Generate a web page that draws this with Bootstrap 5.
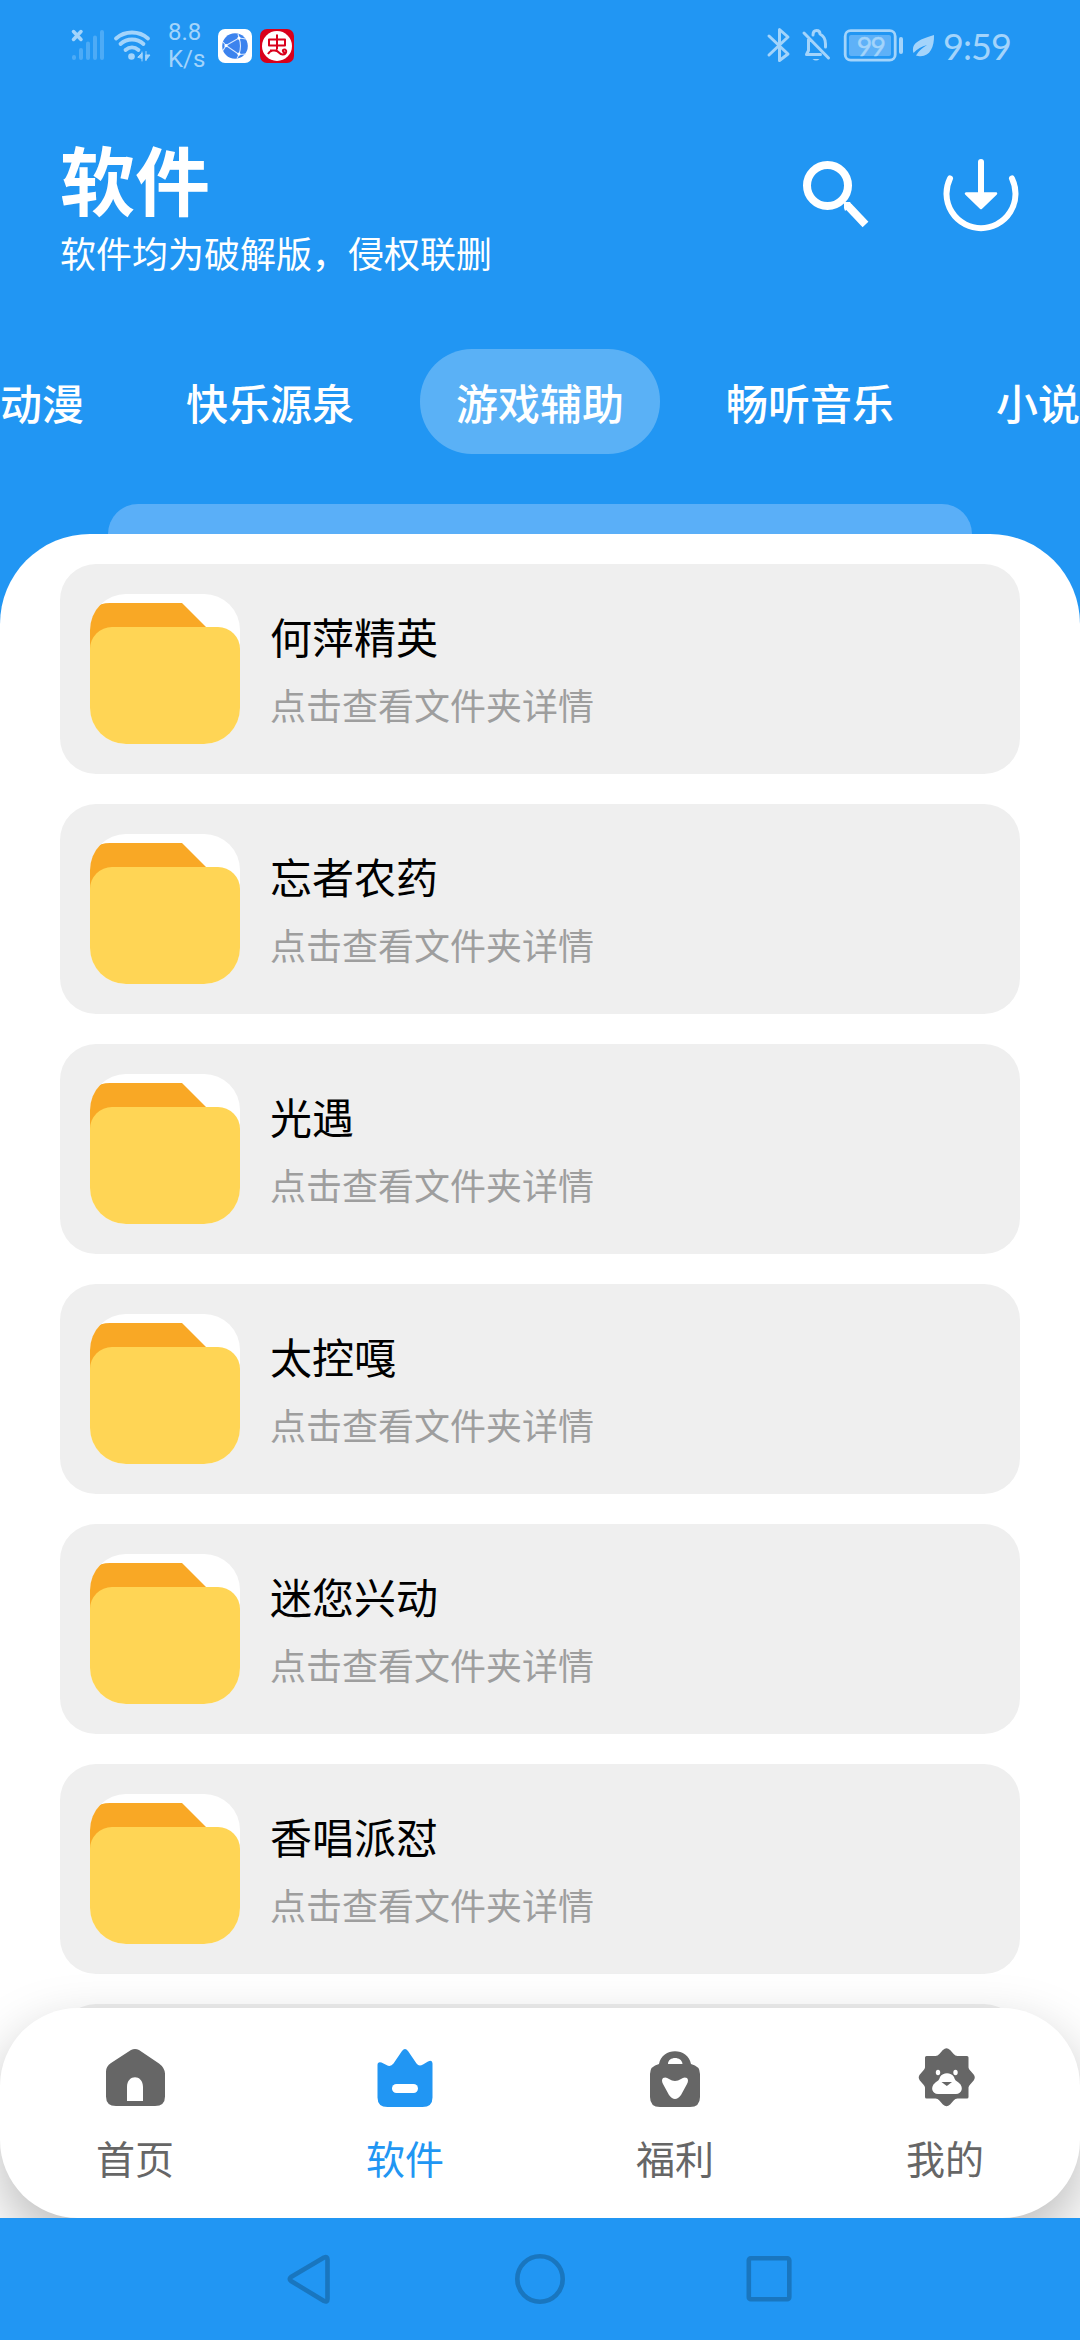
<!DOCTYPE html>
<html lang="zh-CN">
<head>
<meta charset="utf-8">
<meta name="viewport" content="width=device-width, initial-scale=1">
<title>软件</title>
<link href="https://cdn.jsdelivr.net/npm/bootstrap@5.3.0/dist/css/bootstrap.min.css" rel="stylesheet">
<style>
  :root { --app-blue: #2196f3; --status-tint: #a3d4fb; }
  body { font-family: "Noto Sans CJK SC", sans-serif; background: var(--app-blue); }
  .screen { width: 1080px; height: 2340px; background: var(--app-blue); }
  svg { display: block; flex: none; }
  .statusbar { height: 92px; padding: 0 70px 0 68px; color: var(--status-tint); font-family: Roboto, sans-serif; }
  .net-speed { width: 34px; margin-left: 16px; margin-right: 16px; font-size: 24px; line-height: 27px; white-space: nowrap; }
  .clock { font-family: Lato, sans-serif; font-size: 36px; line-height: 1; letter-spacing: -.9px; margin-left: 8px; width: 67px; }
  .app-head { height: 257px; padding: 41px 60px 0; }
  .app-title { font-size: 75px; font-weight: 700; line-height: 90px; }
  .app-note { font-size: 36px; line-height: 50px; margin-top: 4px; }
  .head-icons { margin-top: 22px; }
  .tabs-strip { height: 105px; gap: 30px; }
  .tabs-strip .nav-link { width: 240px; height: 105px; padding: 0; border-radius: 52px; color: #fff; font-size: 42px; font-weight: 500; line-height: 105px; text-align: center; flex: none; white-space: nowrap; }
  .tabs-strip .nav-link.active { background: rgba(255,255,255,.26); }
  .peek { height: 30px; margin: 50px 108px 0; border-radius: 30px 30px 0 0; background: #5aaff8; }
  .panel { min-height: 0; flex: 1 1 0; background: #fff; border-radius: 90px 90px 0 0; padding: 30px 60px 0; gap: 30px; }
  .folder-card { height: 210px; border: 0; border-radius: 36px; background: #efefef; padding: 30px; gap: 30px; flex: none; }
  .thumb { border-radius: 36px; }
  .folder-name { font-size: 42px; line-height: 60px; color: #000; margin-top: 12px; }
  .folder-desc { font-size: 36px; line-height: 52px; color: #9e9e9e; margin-top: 12px; }
  .dock-wrap { height: 210px; position: relative; background: #fff; }
  .dock { height: 210px; background: #fff; border-radius: 78px; box-shadow: 0 24px 56px rgba(0,0,0,.27); padding-top: 36px; }
  .dock .nav-link { color: #666; padding: 0; font-size: 39px; line-height: 56px; }
  .dock .nav-link.active { color: var(--app-blue); }
  .dock svg { margin-bottom: 19px; }
  .sysbar { height: 122px; background: var(--app-blue); position: relative; }
</style>
</head>
<body>
<main class="screen mx-auto d-flex flex-column overflow-hidden">
  <header class="statusbar d-flex align-items-center flex-shrink-0">
    <svg width="84" height="44" viewBox="68 24 84 44" fill="none" stroke-linecap="round">
      <path d="M73.500 31.500l7.500 8M81 31.500l-7.500 8" stroke="#a3d4fb" stroke-width="3.500"/>
      <path d="M74 57v1M81 50v8M88 43.500v14.500M95 37.500v20.500M102 32v26" stroke="#4dabf6" stroke-width="4"/>
      <path d="M116 38.500c9-8 23-8 32 0M120.500 44c6.500-6 16.500-6 23 0M125.500 50c4-3.500 9-3.500 13 0" stroke="#a3d4fb" stroke-width="3.800"/>
      <circle cx="131.500" cy="56.500" r="3.300" fill="#a3d4fb"/>
      <path d="M142 52v9M138 57l4-4v5zM146 51.500v9M146 60l4-5h-4z" fill="#a3d4fb" stroke="#a3d4fb" stroke-width="1"/>
    </svg>
    <div class="net-speed">8.8<br>K/s</div>
    <svg width="76" height="34" viewBox="218 29 76 34" fill="none">
      <rect x="218" y="29" width="34" height="34" rx="7" fill="#fff"/>
      <circle cx="235" cy="46" r="12.800" fill="#3c83ee"/>
      <path d="M226 45.500l13-7.500q3 8 0 16.500zM223 42l3 3.500-3 5M239 38l-1-4M239 38l7 1M239 54.500l7-.5M239 54.500l-2 4" stroke="#d9e9ff" stroke-width="1.100"/>
      <path d="M226 45.500v.1M239 38v.1M239 54v.1" stroke="#fff" stroke-width="3.200" stroke-linecap="round"/>
      <rect x="260" y="29" width="34" height="34" rx="7" fill="#d9001b"/>
      <circle cx="277" cy="46" r="15" fill="#fff"/>
      <path d="M269 39.500h16v6h-16zM277 34.500v15M268 54c2-4 7-4 9-3s3 4 6 3.500c4-.5 4-5 1.500-5s-2 3 .5 3M270 50.500h7" stroke="#d9001b" stroke-width="2" stroke-linejoin="round"/>
    </svg>
    <svg class="ms-auto" width="170" height="38" viewBox="765 27 170 38" fill="none" stroke="#a3d4fb" stroke-width="3" stroke-linecap="round" stroke-linejoin="round">
      <path d="M769 36l19 18-8.500 6.500v-31l8.500 7.500-19 18"/>
      <path d="M804 33l24.500 25M806.500 54.500h14M806.500 54.500l2-4v-11M813 35q0-4.500 3.500-4.500t3.500 3.500c4 2 5.500 5 5.500 10v3"/>
      <path d="M812.500 59h7q-3.500 3-7 0z" fill="#a3d4fb" stroke="none"/>
      <rect x="845.200" y="30.700" width="50" height="29.500" rx="5.500" stroke-width="2.800"/>
      <rect x="849" y="35" width="42" height="21" rx="2" fill="#5eb1f8" stroke="none"/>
      <text x="870.500" y="55.500" text-anchor="middle" font-family="Lato, sans-serif" font-size="26.500" letter-spacing="-1.500" fill="#a3d4fb" stroke="#a3d4fb" stroke-width=".4">99</text>
      <path d="M901 39v13" stroke-width="4"/>
      <path d="M913.500 53c-3-11 8-14 20.500-18 .5 13-5 23-16 21l-2-.5c3-5 7-8 11-10.500-5 1.500-10 4-13.500 8z" fill="#a3d4fb" stroke="none"/>
    </svg>
    <span class="clock">9:59</span>
  </header>

  <section class="app-head d-flex justify-content-between align-items-start flex-shrink-0 text-white">
    <div>
      <h1 class="app-title mb-0">软件</h1>
      <p class="app-note mb-0">软件均为破解版，侵权联删</p>
    </div>
    <svg class="head-icons" width="218" height="80" viewBox="802 155 218 80" fill="none" stroke="#fff">
      <circle cx="827.500" cy="185.500" r="20.500" stroke-width="8"/>
      <path d="M848.500 206.500l17 18" stroke-width="8"/>
      <path d="M844 202l6 0 2 3-7 6-1-3z" fill="#fff" stroke="none"/>
      <path d="M950 178.500A34.500 34.500 0 1 0 1012 178.500" stroke-width="6" stroke-linecap="round"/>
      <path d="M981 162v34" stroke-width="6" stroke-linecap="round"/>
      <path d="M966 193.500h30L981 208z" fill="#fff" stroke-width="2.500" stroke-linejoin="round"/>
    </svg>
  </section>

  <nav class="tabs-strip nav flex-nowrap justify-content-center flex-shrink-0">
    <a class="nav-link">热门动漫</a>
    <a class="nav-link">快乐源泉</a>
    <a class="nav-link active">游戏辅助</a>
    <a class="nav-link">畅听音乐</a>
    <a class="nav-link">小说漫画</a>
  </nav>
  <div class="peek flex-shrink-0"></div>

  <svg width="0" height="0" class="position-absolute">
    <symbol id="folder" viewBox="0 0 150 150">
      <rect width="150" height="150" fill="#fff"/>
      <path d="M0 60V30Q0 9 20 9H92L116 33V60Z" fill="#f9a825"/>
      <rect y="33" width="150" height="140" rx="22" fill="#ffd555"/>
    </symbol>
  </svg>

  <section class="panel d-flex flex-column overflow-hidden" id="folders"></section>

  <div class="dock-wrap flex-shrink-0">
    <nav class="dock nav nav-fill">
      <a class="nav-item nav-link d-flex flex-column align-items-center">
        <svg width="70" height="66" viewBox="100 2044 70 66"><path fill="#666" fill-rule="evenodd" d="M131 2050q4-2 8 0l20 13.500q5.500 4 6 10v23q0 9.500-10 9.500h-39q-10 0-10-9.500v-25q0-5 5-8.500zM127 2101h16v-14c0-13-16-13-16 0z"/></svg>
        首页
      </a>
      <a class="nav-item nav-link active d-flex flex-column align-items-center">
        <svg width="70" height="66" viewBox="370 2044 70 66"><path fill="#2196f3" d="M377.500 2065q0-3.500 4-2.500l5 2.500q4 2.500 7-1.500l8.500-12.500q3-4 6 0l8.500 12.500q2.500 3.500 6.500 1l5-3q4.500-2 4.500 2v34q0 9.500-10 9.500h-35q-10 0-10-9.500z"/><rect x="392" y="2084" width="26" height="9" rx="4.500" fill="#fff"/></svg>
        软件
      </a>
      <a class="nav-item nav-link d-flex flex-column align-items-center">
        <svg width="70" height="66" viewBox="640 2044 70 66"><path fill="#666" d="M650 2074q0-8 9-10c3-17 29-17 32 0q9 2 9 10v23q0 10-10 10h-30q-10 0-10-10z"/><path fill="#fff" d="M668 2064c0-8 14-8 14.500 0zM663 2078q3-1.500 6 1 6 4 12 0 3-2.500 6-1 2 2 0 6l-6 11q-6 8-12 0l-6-11q-2-4 0-6z"/></svg>
        福利
      </a>
      <a class="nav-item nav-link d-flex flex-column align-items-center">
        <svg width="70" height="66" viewBox="910 2044 70 66"><path fill="#666" stroke="#666" stroke-width="3" stroke-linejoin="round" d="M926.500 2057.500h9q3 0 5-2.500l3.500-4q2.500-2.500 5 0l3.500 4q2 2.500 5 2.500h9.500v10q0 2 2.500 4.500l3 3.500q1.500 2 0 4l-3 3.500q-2.500 2.500-2.500 4.500v9.500h-9.500q-3 0-5 2.500l-3.500 4q-2.500 2.500-5 0l-3.500-4q-2-2.500-5-2.500h-9v-9.500q0-2-2.500-4.500l-3-3.500q-1.500-2 0-4l3-3.500q2.500-2.500 2.500-4.500z"/><ellipse cx="938" cy="2072.500" rx="2.200" ry="2.700" fill="#fff"/><ellipse cx="955.500" cy="2072.500" rx="2.200" ry="2.700" fill="#fff"/><path fill="#fff" d="M940 2077c3-5 11-5 14 0 1 4 3 4 5 6 5 4 3 11-3 11h-18c-6 0-8-7-3-11 2-2 4-2 5-6z"/><path fill="#666" d="M941.500 2082h10.500l-5.200 4z"/></svg>
        我的
      </a>
    </nav>
  </div>

  <footer class="sysbar d-flex justify-content-center flex-shrink-0">
    <svg width="506" height="122" viewBox="287 2218 506 122" fill="none" stroke="#1976bf" stroke-width="4.600" stroke-linejoin="round">
      <path d="M324 2257.500L291 2277q-2.500 2 0 4L324 2301q3.500 1.500 3.500-2v-39.500q0-3.500-3.500-2z"/>
      <circle cx="540" cy="2279" r="22.700"/>
      <rect x="748.800" y="2258.300" width="40.500" height="41" rx="2"/>
    </svg>
  </footer>
</main>
<script src="https://cdn.jsdelivr.net/npm/bootstrap@5.3.0/dist/js/bootstrap.bundle.min.js"></script>
<script>
  const names = ['何萍精英', '忘者农药', '光遇', '太控嘎', '迷您兴动', '香唱派怼', ''];
  document.getElementById('folders').innerHTML = names.map(name => `
    <article class="card folder-card d-flex flex-row">
      ${name ? `<svg class="thumb" width="150" height="150"><use href="#folder"/></svg>
      <div>
        <div class="folder-name">${name}</div>
        <div class="folder-desc">点击查看文件夹详情</div>
      </div>` : ''}
    </article>`).join('');
</script>
</body>
</html>
